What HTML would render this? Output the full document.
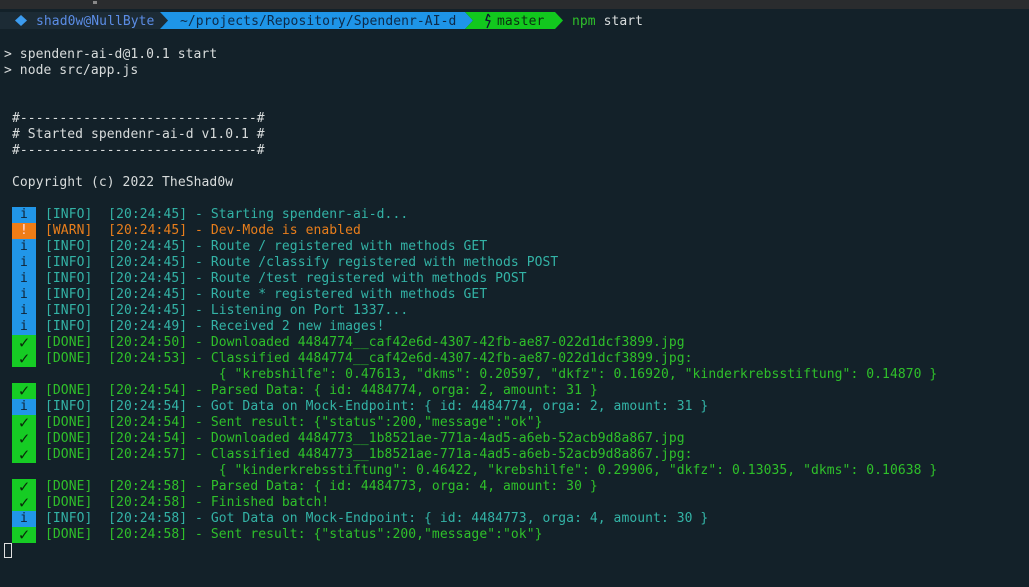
<!DOCTYPE html>
<html><head><meta charset="utf-8"><style>
html,body{margin:0;padding:0}
body{width:1029px;height:587px;background:#132129;overflow:hidden;position:relative;font-family:"DejaVu Sans Mono","Liberation Mono",monospace;font-size:13px;letter-spacing:0.07px;color:#d8dcdc}
.top{position:absolute;left:0;top:0;width:1029px;height:9px;background:#2a2c2e}
.r{position:absolute;left:0;height:16px;line-height:16px;white-space:pre;margin-top:2px}
.b{position:absolute;left:12px;width:24px;height:16px;text-align:center;color:#111;line-height:16px}
.bi{background:#2196e8;color:#123}
.bw{background:#ef7d16}
.bd{background:#16cc24;font-size:17px;color:#0a2a0a}
.i{color:#33b3a6}.w{color:#e87e1c}.d{color:#2fc02a}
.t{position:absolute;left:45px}
</style></head><body>
<div class="top"><div style="position:absolute;left:93px;top:1px;width:4px;height:3px;background:#888"></div></div>
<svg style="position:absolute;left:0;top:12px" width="600" height="18">
<polygon points="0,0 160,0 168,8.5 160,17 0,17" fill="#1c2b35"/>
<polygon points="160,0 465,0 473,8.5 465,17 160,17 168,8.5" fill="#1e95e8"/>
<polygon points="465,0 555,0 563,8.5 555,17 465,17 473,8.5" fill="#12c81e"/>
<polygon points="21,3 27,8.5 21,14 15,8.5" fill="#3c9cf0"/>
<path d="M488 2 L486 8 L490 9 L487 16 M488 2 L490 5" stroke="#113" stroke-width="1.3" fill="none"/>
</svg>
<div class="r" style="top:12px;left:36px;color:#5b8de6">shad0w@NullByte</div>
<div class="r" style="top:12px;left:180px;color:#0e2a48">~/projects/Repository/Spendenr-AI-d</div>
<div class="r" style="top:12px;left:497px;color:#0c3012">master</div>
<div class="r" style="top:12px;left:572px"><span style="color:#2fc02a">npm</span> start</div>
<div class="r" style="top:45px;left:4px">&gt; spendenr-ai-d@1.0.1 start</div>
<div class="r" style="top:61px;left:4px">&gt; node src/app.js</div>
<div class="r" style="top:109px;left:12px">#------------------------------#</div>
<div class="r" style="top:125px;left:12px"># Started spendenr-ai-d v1.0.1 #</div>
<div class="r" style="top:141px;left:12px">#------------------------------#</div>
<div class="r" style="top:173px;left:12px">Copyright (c) 2022 TheShad0w</div>

<div class="r" style="top:205px;width:1029px"><div class="b bi">i</div><span class="t i">[INFO]  [20:24:45] - Starting spendenr-ai-d...</span></div>
<div class="r" style="top:221px;width:1029px"><div class="b bw" style="color:#fde">!</div><span class="t w">[WARN]  [20:24:45] - Dev-Mode is enabled</span></div>
<div class="r" style="top:237px;width:1029px"><div class="b bi">i</div><span class="t i">[INFO]  [20:24:45] - Route / registered with methods GET</span></div>
<div class="r" style="top:253px;width:1029px"><div class="b bi">i</div><span class="t i">[INFO]  [20:24:45] - Route /classify registered with methods POST</span></div>
<div class="r" style="top:269px;width:1029px"><div class="b bi">i</div><span class="t i">[INFO]  [20:24:45] - Route /test registered with methods POST</span></div>
<div class="r" style="top:285px;width:1029px"><div class="b bi">i</div><span class="t i">[INFO]  [20:24:45] - Route * registered with methods GET</span></div>
<div class="r" style="top:301px;width:1029px"><div class="b bi">i</div><span class="t i">[INFO]  [20:24:45] - Listening on Port 1337...</span></div>
<div class="r" style="top:317px;width:1029px"><div class="b bi">i</div><span class="t i">[INFO]  [20:24:49] - Received 2 new images!</span></div>
<div class="r" style="top:333px;width:1029px"><div class="b bd">✓</div><span class="t d">[DONE]  [20:24:50] - Downloaded 4484774__caf42e6d-4307-42fb-ae87-022d1dcf3899.jpg</span></div>
<div class="r" style="top:349px;width:1029px"><div class="b bd">✓</div><span class="t d">[DONE]  [20:24:53] - Classified 4484774__caf42e6d-4307-42fb-ae87-022d1dcf3899.jpg:</span></div>
<div class="r" style="top:365px;width:1029px"><span class="t d">                      { "krebshilfe": 0.47613, "dkms": 0.20597, "dkfz": 0.16920, "kinderkrebsstiftung": 0.14870 }</span></div>
<div class="r" style="top:381px;width:1029px"><div class="b bd">✓</div><span class="t d">[DONE]  [20:24:54] - Parsed Data: { id: 4484774, orga: 2, amount: 31 }</span></div>
<div class="r" style="top:397px;width:1029px"><div class="b bi">i</div><span class="t i">[INFO]  [20:24:54] - Got Data on Mock-Endpoint: { id: 4484774, orga: 2, amount: 31 }</span></div>
<div class="r" style="top:413px;width:1029px"><div class="b bd">✓</div><span class="t d">[DONE]  [20:24:54] - Sent result: {"status":200,"message":"ok"}</span></div>
<div class="r" style="top:429px;width:1029px"><div class="b bd">✓</div><span class="t d">[DONE]  [20:24:54] - Downloaded 4484773__1b8521ae-771a-4ad5-a6eb-52acb9d8a867.jpg</span></div>
<div class="r" style="top:445px;width:1029px"><div class="b bd">✓</div><span class="t d">[DONE]  [20:24:57] - Classified 4484773__1b8521ae-771a-4ad5-a6eb-52acb9d8a867.jpg:</span></div>
<div class="r" style="top:461px;width:1029px"><span class="t d">                      { "kinderkrebsstiftung": 0.46422, "krebshilfe": 0.29906, "dkfz": 0.13035, "dkms": 0.10638 }</span></div>
<div class="r" style="top:477px;width:1029px"><div class="b bd">✓</div><span class="t d">[DONE]  [20:24:58] - Parsed Data: { id: 4484773, orga: 4, amount: 30 }</span></div>
<div class="r" style="top:493px;width:1029px"><div class="b bd">✓</div><span class="t d">[DONE]  [20:24:58] - Finished batch!</span></div>
<div class="r" style="top:509px;width:1029px"><div class="b bi">i</div><span class="t i">[INFO]  [20:24:58] - Got Data on Mock-Endpoint: { id: 4484773, orga: 4, amount: 30 }</span></div>
<div class="r" style="top:525px;width:1029px"><div class="b bd">✓</div><span class="t d">[DONE]  [20:24:58] - Sent result: {"status":200,"message":"ok"}</span></div>
<div style="position:absolute;left:4px;top:543px;width:6px;height:13px;border:1px solid #e0e0e0"></div>
</body></html>
